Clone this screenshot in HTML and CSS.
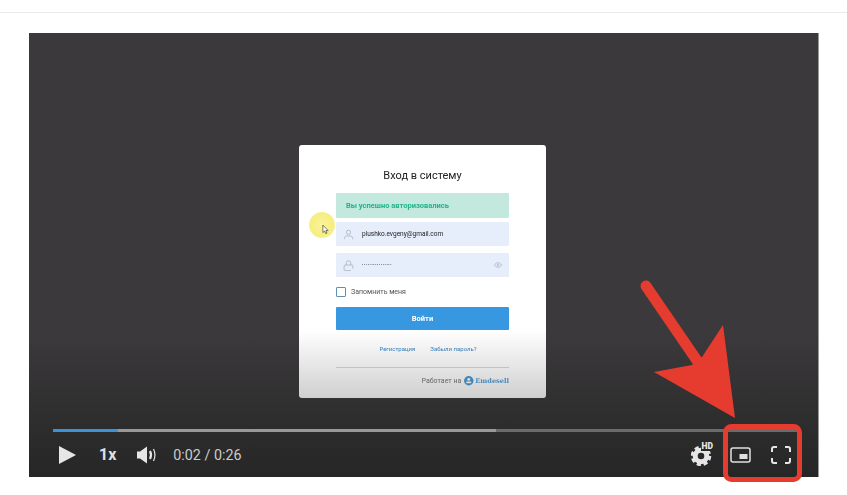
FILE: index.html
```html
<!DOCTYPE html>
<html lang="en">
<head>
  <meta charset="UTF-8">
  <title>Video player</title>
  <link rel="stylesheet" href="styles.css">
</head>
<body>
  <div class="topRule"></div>

  <div class="player">
    <div class="stage">
      <div class="card">
        <h2 class="cardTitle">Вход в систему</h2>
        <div class="alert">Вы успешно авторизовались</div>
        <div class="field">
          <svg class="fieldIcon" viewBox="0 0 12 12"><circle cx="6" cy="3.6" r="2.3"/><path d="M1.5 11.2v-1.4c0-1.400 1.200-2.200 2.600-2.200h3.800c1.400 0 2.600.8 2.600 2.200v1.400"/></svg>
          <span class="fieldText">plushko.evgeny@gmail.com</span>
        </div>
        <div class="field">
          <svg class="fieldIcon" viewBox="0 0 12 12"><path d="M3.500 5.500V3.400a2.500 2.500 0 0 1 5 0v2.100"/><path d="M8.500 11.500H2.200a1 1 0 0 1-1-1V6.500a1 1 0 0 1 1-1h7.600a1 1 0 0 1 1 1v3"/></svg>
          <span class="fieldDots">••••••••••••••••</span>
          <svg class="eyeIcon" viewBox="0 0 12 8"><path d="M.5 4C2 1.6 4 .6 6 .6s4 1 5.500 3.400C10 6.400 8 7.400 6 7.400S2 6.400.5 4z"/><circle cx="6" cy="4" r="1.300"/></svg>
        </div>
        <label class="remember"><span class="checkbox"></span>Запомнить меня</label>
        <div class="submit">Войти</div>
        <div class="links"><span>Регистрация</span><span>Забыли пароль?</span></div>
        <div class="poweredBy">
          Работает на
          <svg class="logoIcon" viewBox="0 0 12 12"><circle cx="6" cy="6" r="6"/><circle class="logoCut" cx="6" cy="4.300" r="1.800"/><rect class="logoCut" x="2.600" y="7" width="6.800" height="2" rx="1"/></svg>
          <span class="logoText">Emdesell</span>
        </div>
      </div>
      <div class="cursorGlow"></div>
      <svg class="cursorIcon" viewBox="0 0 8 12"><path d="M1 1v8.500l2-1.800 1.300 3 1.400-.6-1.300-2.900h2.600z"/></svg>
      <div class="fade"></div>
    </div>

    <div class="controls">
      <div class="progress">
        <div class="progressBuffered"></div>
        <div class="progressPlayed"></div>
      </div>
      <div class="buttons">
        <svg class="playIcon" viewBox="0 0 17 18"><path d="M0 0l17 9-17 9z"/></svg>
        <span class="speed">1x</span>
        <svg class="volumeIcon" viewBox="0 0 20 18"><path d="M0 5.500h3L10 .5v17l-7-5H0z"/><path class="volumeInner" d="M13 5c1.200 2.400 1.200 5.600 0 8"/><path class="volumeOuter" d="M16.500 3c1.700 3.500 1.700 8.500 0 12"/></svg>
        <span class="time">0:02 / 0:26</span>
        <span class="spacer"></span>
        <span class="hdGear">
          <svg class="gearIcon" viewBox="0 0 22 22"><circle class="gearTeeth" cx="10" cy="12" r="8.500"/><circle class="gearRing" cx="10" cy="12" r="5.800"/></svg>
          <span class="hdLabel">HD</span>
        </span>
        <svg class="pipIcon" viewBox="0 0 21 16"><rect class="pipFrame" x="1" y="1" width="19" height="14" rx="2"/><rect class="pipInner" x="9.500" y="7" width="8" height="5"/></svg>
        <svg class="fullIcon" viewBox="0 0 20 18"><path d="M1 6V3a2 2 0 0 1 2-2h3M14 1h3a2 2 0 0 1 2 2v3M19 12v3a2 2 0 0 1-2 2h-3M6 17H3a2 2 0 0 1-2-2v-3"/></svg>
      </div>
    </div>
  </div>

  <svg class="annotation" viewBox="0 0 847 495">
    <line class="arrowShaft" x1="646" y1="286" x2="698" y2="362"/>
    <polygon class="arrowHead" points="735,418 654,372 692,365 702,357 723,325"/>
    <rect class="arrowBox" x="725.500" y="426.500" width="74" height="53" rx="6"/>
  </svg>
</body>
</html>
```

FILE: styles.css
```css
* {
  box-sizing: border-box;
}

body {
  margin: 0;
  height: 495px;
  overflow: hidden;
  position: relative;
  background: #fff;
  font-family: Roboto, Arial, sans-serif;
}

.topRule {
  height: 13px;
  border-bottom: 1px solid #e9ecef;
}

.player {
  width: 790px;
  height: 444px;
  margin: 20px 0 0 29px;
  background: linear-gradient(to bottom, #3b393b 0, #3b393b 68%, #262626 100%);
  border-right: 1px solid #999;
  position: relative;
  display: flex;
  flex-direction: column;
}

.stage {
  flex: 1;
  display: flex;
  justify-content: center;
  padding: 112px 2px 0 0;
  position: relative;
}

.fade {
  position: absolute;
  left: 270px;
  top: 297px;
  width: 247px;
  height: 68px;
  background: linear-gradient(to bottom, rgba(0, 0, 0, 0), rgba(0, 0, 0, 0.19));
  border-radius: 0 0 3px 3px;
}

.card {
  width: 247px;
  height: 253px;
  background: #fff;
  border-radius: 3px;
  padding: 23px 37px 0;
  display: flex;
  flex-direction: column;
  filter: blur(0.5px);
}

.cardTitle {
  margin: 0 0 10px;
  font-size: 11px;
  line-height: 15px;
  font-weight: 400;
  text-align: center;
  color: #222;
}

.alert {
  height: 25px;
  background: #c3e8de;
  border-radius: 1px;
  padding: 0 10px;
  margin-bottom: 4px;
  font-size: 7.5px;
  font-weight: 700;
  line-height: 25px;
  color: #20b48c;
}

.field {
  height: 24px;
  margin-bottom: 7px;
  background: #e6edfb;
  border-radius: 1px;
  padding: 0 7px;
  display: flex;
  align-items: center;
  font-size: 6.5px;
  color: #222;
}

.fieldIcon {
  width: 11px;
  height: 11px;
  margin-right: 8px;
  fill: none;
  stroke: #a4adc0;
  stroke-width: 0.8;
}

.fieldDots {
  font-size: 3.5px;
  letter-spacing: 0.7px;
  color: #222;
}

.eyeIcon {
  width: 8px;
  height: 6px;
  margin-left: auto;
  fill: none;
  stroke: #a4abb8;
  stroke-width: 1;
}

.remember {
  display: flex;
  align-items: center;
  height: 12px;
  margin: 2px 0 9px;
  font-size: 7px;
  color: #555;
}

.checkbox {
  width: 10px;
  height: 10px;
  margin-right: 5px;
  border: 1px solid #5f8fb5;
  border-radius: 1px;
  background: #fff;
}

.submit {
  height: 23px;
  background: #3797e0;
  border-radius: 1px;
  font-size: 7.5px;
  font-weight: 700;
  line-height: 23px;
  text-align: center;
  color: #fff;
}

.links {
  display: flex;
  justify-content: center;
  gap: 15px;
  margin-top: 15px;
  padding: 0 0 14px 11px;
  border-bottom: 1px solid #d8d8d8;
  font-size: 6px;
  line-height: 8px;
  color: #3a85c8;
}

.poweredBy {
  display: flex;
  justify-content: flex-end;
  align-items: center;
  margin-top: 8px;
  font-size: 7px;
  color: #777;
}

.logoIcon {
  width: 9.500px;
  height: 9.500px;
  margin-left: 3px;
  fill: #4e9bd6;
}

.logoCut {
  fill: #fff;
}

.logoText {
  margin-left: 1.500px;
  font-family: "DejaVu Serif", serif;
  font-size: 6.600px;
  font-weight: 700;
  color: #5a9fd4;
}

.cursorGlow {
  position: absolute;
  left: 280px;
  top: 179px;
  width: 26px;
  height: 26px;
  border-radius: 50%;
  background: radial-gradient(circle, #f9f39a 0, #f6ee80 65%, rgba(246, 238, 128, 0) 100%);
}

.cursorIcon {
  position: absolute;
  left: 293px;
  top: 191px;
  width: 7px;
  height: 11px;
  fill: #fff;
  stroke: #444;
  stroke-width: 0.8;
}

.controls {
  height: 48px;
  padding: 0 21px 0 24px;
  display: flex;
  flex-direction: column;
}

.progress {
  height: 3px;
  background: #6b6b6b;
  position: relative;
}

.progressBuffered {
  position: absolute;
  left: 0;
  top: 0;
  width: 443px;
  height: 3px;
  background: #999;
}

.progressPlayed {
  position: absolute;
  left: 0;
  top: 0;
  width: 65px;
  height: 3px;
  background: #3a92d8;
}

.buttons {
  flex: 1;
  display: flex;
  align-items: center;
  padding: 0 6px;
}

.playIcon {
  width: 17px;
  height: 18px;
  fill: #e6e6e6;
  margin-right: 23px;
}

.speed {
  font-size: 16px;
  font-weight: 700;
  color: #e0e0e0;
  margin-right: 21px;
}

.volumeIcon {
  width: 20px;
  height: 18px;
  fill: #e6e6e6;
  margin-right: 16px;
}

.volumeInner {
  fill: none;
  stroke: #e6e6e6;
  stroke-width: 2.200;
}

.volumeOuter {
  fill: none;
  stroke: #e6e6e6;
  stroke-width: 1.200;
}

.time {
  font-size: 14.300px;
  color: #ccc;
}

.spacer {
  flex: 1;
}

.hdGear {
  width: 24px;
  height: 24px;
  position: relative;
  margin-right: 15px;
}

.gearIcon {
  width: 22px;
  height: 22px;
  position: absolute;
  left: 0;
  top: 1px;
  fill: none;
}

.gearRing {
  stroke: #e6e6e6;
  stroke-width: 5;
}

.gearTeeth {
  stroke: #e6e6e6;
  stroke-width: 3.500;
  stroke-dasharray: 4 2.700;
}

.hdLabel {
  position: absolute;
  right: 1px;
  top: -2px;
  padding: 0 1px;
  background: #282828;
  font-size: 8.500px;
  font-weight: 900;
  line-height: 10px;
  color: #e6e6e6;
}

.pipIcon {
  width: 21px;
  height: 16px;
  margin-right: 20px;
}

.pipFrame {
  fill: none;
  stroke: #e0e0e0;
  stroke-width: 1.500;
}

.pipInner {
  fill: #e0e0e0;
}

.fullIcon {
  width: 20px;
  height: 18px;
  fill: none;
  stroke: #e6e6e6;
  stroke-width: 2;
}

.annotation {
  position: absolute;
  left: 0;
  top: 0;
  width: 847px;
  height: 495px;
}

.arrowShaft {
  stroke: #e63c30;
  stroke-width: 11;
  stroke-linecap: round;
}

.arrowHead {
  fill: #e63c30;
}

.arrowBox {
  fill: none;
  stroke: #e63c30;
  stroke-width: 5;
}
```
